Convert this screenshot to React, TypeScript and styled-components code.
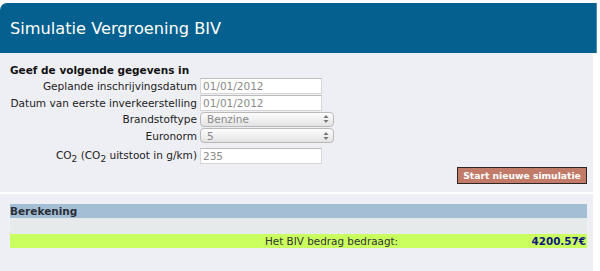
import React from "react";
import styled, { createGlobalStyle } from "styled-components";

const GlobalStyle = createGlobalStyle`
    body {
        margin: 0;
        background: #ffffff;
        font-family: "DejaVu Sans", Verdana, sans-serif;
    }
`;

const Page = styled.div`
    width: 597px;
    padding-top: 3px;
`;

const Header = styled.div`
    background: #04608e;
    height: 50px;
    border-top-left-radius: 7px;
    border-right: 1px solid #4d8bb0;
    padding-left: 10px;
    display: flex;
    align-items: center;
    color: #ffffff;
    font-size: 16.2px;
`;

const Panel = styled.div`
    background: #eeeff4;
    width: 593px;
    height: 218px;
`;

const FormSection = styled.div`
    padding: 10px 6px 8px 10px;
`;

const FormTitle = styled.div`
    font-weight: bold;
    font-size: 10.5px;
    color: #111;
    height: 15px;
    line-height: 15px;
`;

const Row = styled.div<{ $tall?: boolean }>`
    display: grid;
    grid-template-columns: 187px auto;
    column-gap: 3px;
    align-items: center;
    height: ${(p) => (p.$tall ? "20px" : "16.5px")};
    margin-top: ${(p) => (p.$tall ? "2px" : "0")};
`;

const Label = styled.label`
    text-align: right;
    font-size: 10.55px;
    color: #222;
    white-space: nowrap;
`;

const TextInput = styled.div`
    width: 118px;
    height: 14px;
    background: #ffffff;
    border: 1px solid #d6d6d6;
    border-top-color: #bcbcbc;
    padding-left: 2px;
    font-size: 10.5px;
    line-height: 14px;
    color: #8a8a8a;
`;

const Select = styled.div`
    width: 122px;
    height: 13px;
    border: 1px solid #b9b9b9;
    border-radius: 4px;
    background: linear-gradient(#fdfdfd, #e3e3e3);
    padding-left: 6px;
    padding-right: 4px;
    display: flex;
    align-items: center;
    justify-content: space-between;
    font-size: 10.5px;
    color: #8a8a8a;
`;

const Sub = styled.sub`
    font-size: 9px;
    vertical-align: -3px;
`;

const ButtonRow = styled.div`
    display: flex;
    justify-content: flex-end;
    margin-top: 1px;
`;

const Button = styled.button`
    background: #c27b68;
    border: 1px solid #2e2522;
    color: #ffffff;
    font-family: "DejaVu Sans", Verdana, sans-serif;
    font-weight: bold;
    font-size: 9.2px;
    width: 130px;
    height: 17px;
    padding: 0;
`;

const Separator = styled.div`
    height: 2px;
    background: #ffffff;
`;

const ResultSection = styled.div`
    padding: 10px 6px 0 10px;
`;

const SectionBar = styled.div`
    background: #a4bfd5;
    height: 14px;
    line-height: 14px;
    font-weight: bold;
    font-size: 10.5px;
    color: #2b2f35;
`;

const Spacer = styled.div`
    background: #e6eaea;
    height: 16px;
`;

const ResultBar = styled.div`
    background: #c9ff5f;
    height: 14px;
    display: flex;
    justify-content: space-between;
    align-items: center;
    font-size: 10.4px;
`;

const ResultLabel = styled.span`
    color: #333;
    padding-left: 255px;
`;

const ResultValue = styled.span`
    font-weight: bold;
    color: #0d1680;
    padding-right: 1px;
`;

const SelectArrows = () => (
    <svg width="6" height="10" viewBox="0 0 6 10">
        <path d="M0.5 4 L3 1 L5.5 4 Z" fill="#777" />
        <path d="M0.5 6 L3 9 L5.5 6 Z" fill="#777" />
    </svg>
);

const App: React.FC = () => {
    return (
        <Page>
            <GlobalStyle />
            <Header>Simulatie Vergroening BIV</Header>
            <Panel>
                <FormSection>
                    <FormTitle>Geef de volgende gegevens in</FormTitle>
                    <Row>
                        <Label>Geplande inschrijvingsdatum</Label>
                        <TextInput>01/01/2012</TextInput>
                    </Row>
                    <Row>
                        <Label>Datum van eerste inverkeerstelling</Label>
                        <TextInput>01/01/2012</TextInput>
                    </Row>
                    <Row>
                        <Label>Brandstoftype</Label>
                        <Select>
                            Benzine
                            <SelectArrows />
                        </Select>
                    </Row>
                    <Row>
                        <Label>Euronorm</Label>
                        <Select>
                            5
                            <SelectArrows />
                        </Select>
                    </Row>
                    <Row $tall>
                        <Label>
                            CO<Sub>2</Sub> (CO<Sub>2</Sub> uitstoot in g/km)
                        </Label>
                        <TextInput>235</TextInput>
                    </Row>
                    <ButtonRow>
                        <Button>Start nieuwe simulatie</Button>
                    </ButtonRow>
                </FormSection>
                <Separator />
                <ResultSection>
                    <SectionBar>Berekening</SectionBar>
                    <Spacer />
                    <ResultBar>
                        <ResultLabel>Het BIV bedrag bedraagt:</ResultLabel>
                        <ResultValue>4200.57€</ResultValue>
                    </ResultBar>
                </ResultSection>
            </Panel>
        </Page>
    );
};

export default App;
